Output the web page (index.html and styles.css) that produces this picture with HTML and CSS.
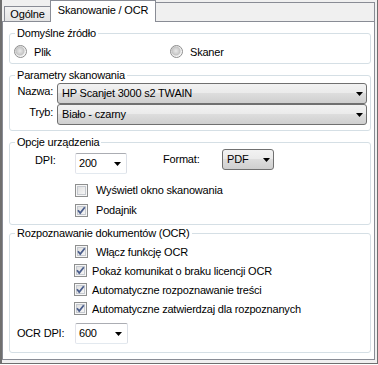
FILE: index.html
```html
<!DOCTYPE html>
<html lang="pl">
<head>
<meta charset="utf-8">
<title>Skanowanie / OCR</title>
<link rel="stylesheet" href="styles.css">
</head>
<body>
<div class="frame">
  <div class="tabstrip">
    <div class="tab">Ogólne</div>
    <div class="tab active">Skanowanie / OCR</div>
    <div class="tabfill"></div>
  </div>
  <div class="page">
    <fieldset class="group g1">
      <legend>Domyślne źródło</legend>
      <div class="radios">
        <div class="radio r-first"><span class="rb"></span>Plik</div>
        <div class="radio"><span class="rb"></span>Skaner</div>
      </div>
    </fieldset>

    <fieldset class="group g2">
      <legend>Parametry skanowania</legend>
      <div class="params">
        <span class="plabel">Nazwa:</span>
        <div class="combo">HP Scanjet 3000 s2 TWAIN<svg class="arrow" width="7" height="4" viewBox="0 0 7 4"><polygon points="0,0 7,0 3.5,4" fill="#000"/></svg></div>
        <span class="plabel">Tryb:</span>
        <div class="combo">Biało - czarny<svg class="arrow" width="7" height="4" viewBox="0 0 7 4"><polygon points="0,0 7,0 3.5,4" fill="#000"/></svg></div>
      </div>
    </fieldset>

    <fieldset class="group g3">
      <legend>Opcje urządzenia</legend>
      <div class="devrow">
        <span class="flabel dpi-label">DPI:</span>
        <div class="combo white dpi-combo">200<svg class="arrow" width="7" height="4" viewBox="0 0 7 4"><polygon points="0,0 7,0 3.5,4" fill="#000"/></svg></div>
        <span class="flabel fmt-label">Format:</span>
        <div class="combo fmt-combo">PDF<svg class="arrow" width="7" height="4" viewBox="0 0 7 4"><polygon points="0,0 7,0 3.5,4" fill="#000"/></svg></div>
      </div>
      <div class="checks checks-dev">
        <div class="check"><span class="cb"></span>Wyświetl okno skanowania</div>
        <div class="check"><span class="cb checked"><svg width="11" height="11" viewBox="0 0 11 11"><path d="M2 5.3 L4.2 8 L8.8 2.2" fill="none" stroke="#4b5e8c" stroke-width="1.8"/></svg></span>Podajnik</div>
      </div>
    </fieldset>

    <fieldset class="group g4">
      <legend>Rozpoznawanie dokumentów (OCR)</legend>
      <div class="checks checks-ocr">
        <div class="check wide"><span class="cb checked"><svg width="11" height="11" viewBox="0 0 11 11"><path d="M2 5.3 L4.2 8 L8.8 2.2" fill="none" stroke="#4b5e8c" stroke-width="1.8"/></svg></span>Włącz funkcję OCR</div>
        <div class="check narrow"><span class="cb checked"><svg width="11" height="11" viewBox="0 0 11 11"><path d="M2 5.3 L4.2 8 L8.8 2.2" fill="none" stroke="#4b5e8c" stroke-width="1.8"/></svg></span>Pokaż komunikat o braku licencji OCR</div>
        <div class="check narrow"><span class="cb checked"><svg width="11" height="11" viewBox="0 0 11 11"><path d="M2 5.3 L4.2 8 L8.8 2.2" fill="none" stroke="#4b5e8c" stroke-width="1.8"/></svg></span>Automatyczne rozpoznawanie treści</div>
        <div class="check narrow"><span class="cb checked"><svg width="11" height="11" viewBox="0 0 11 11"><path d="M2 5.3 L4.2 8 L8.8 2.2" fill="none" stroke="#4b5e8c" stroke-width="1.8"/></svg></span>Automatyczne zatwierdzaj dla rozpoznanych</div>
      </div>
      <div class="ocrrow">
        <span class="flabel ocr-label">OCR DPI:</span>
        <div class="combo white ocr-combo">600<svg class="arrow" width="7" height="4" viewBox="0 0 7 4"><polygon points="0,0 7,0 3.5,4" fill="#000"/></svg></div>
      </div>
    </fieldset>
  </div>
</div>
</body>
</html>
```

FILE: styles.css
```css
* { box-sizing: border-box; }
html, body { margin: 0; padding: 0; background: #fff; }
body {
  width: 378px;
  height: 365px;
  overflow: hidden;
  font-family: "Liberation Sans", Arial, sans-serif;
  font-size: 11px;
  letter-spacing: -0.2px;
  color: #000;
}

.frame {
  width: 378px;
  height: 364px;
  background: #f0f0f0;
  border-left: 2px solid #6f6f6f;
  border-right: 1px solid #6f6f6f;
  border-bottom: 1px solid #6f6f6f;
  display: flex;
  flex-direction: column;
}

/* tabs */
.tabstrip {
  height: 21px;
  display: flex;
  align-items: flex-end;
  flex-shrink: 0;
}
.tab {
  margin-left: 2px;
  width: 47px;
  height: 15px;
  border: 1px solid #898c95;
  border-bottom: none;
  background: linear-gradient(#f3f3f3, #e4e4e4);
  display: flex;
  align-items: center;
  justify-content: center;
  line-height: 13px;
}
.tab.active {
  position: relative;
  z-index: 1;
  margin-left: -1px;
  width: 106px;
  height: 22px;
  margin-bottom: -1px;
  background: #fff;
  padding-bottom: 2px;
}
.tabfill {
  flex: 1;
  height: 19px;
  margin-right: 2px;
  border-top: 1px solid #898c95;
  border-right: 1px solid #898c95;
  background: #f0f0f0;
}

/* page */
.page {
  width: 373px;
  height: 339px;
  background: #fff;
  border: 1px solid #898c95;
  padding: 0 3px 0 6px;
  flex-shrink: 0;
}

.group {
  display: block;
  margin: 0;
  padding: 0;
  min-width: 0;
  width: 362px;
  border: 1px solid #d5dfe5;
  border-radius: 3px;
}
.group legend {
  margin-left: 5px;
  padding: 0 2px;
  height: 14px;
  line-height: 14px;
}
.g1 { margin-top: 4px; }
.g2 { margin-top: 4px; }
.g3 { margin-top: 4px; }
.g4 { margin-top: 1px; }

/* radios */
.radios {
  height: 23px;
  display: flex;
  align-items: center;
  padding-left: 4px;
}
.radio {
  display: flex;
  align-items: center;
  gap: 7px;
}
.r-first { width: 156px; }
.rb {
  width: 13px;
  height: 13px;
  border-radius: 50%;
  border: 1px solid #8d8d8d;
  background: radial-gradient(circle at 45% 45%, #e9e9e9 0, #cfcfcf 3px, #c3c3c3 4px, #ececec 5px, #fbfbfb 6px);
}

/* params */
.params {
  display: grid;
  grid-template-columns: 43px 310px;
  column-gap: 4px;
  padding: 1px 0 5px 0;
}
.plabel {
  text-align: right;
  line-height: 17px;
}

.combo {
  height: 21px;
  border: 1px solid #707070;
  border-radius: 3px;
  background: linear-gradient(#f2f2f2 0%, #ebebeb 45%, #dddddd 50%, #cfcfcf 100%);
  display: flex;
  align-items: center;
  justify-content: space-between;
  padding: 0 3px 0 4px;
  line-height: 13px;
}
.combo.white {
  background: #fff;
  border-color: #abadb3 #dbdfe6 #e3e9ef #e2e3ea;
  border-radius: 2px;
  padding: 0 3px 0 3px;
}
.arrow { display: block; flex-shrink: 0; }

/* device row */
.devrow {
  height: 31px;
  display: flex;
  align-items: flex-start;
  padding-left: 25px;
}
.flabel {
  height: 21px;
  line-height: 21px;
}
.dpi-label { width: 40px; margin-top: 1px; }
.dpi-combo { width: 52px; margin-top: 4px; }
.dpi-combo .arrow, .ocr-combo .arrow { margin-right: 2px; }
.fmt-label { width: 59px; margin-left: 36px; }
.fmt-combo { width: 52px; }

/* checkboxes */
.checks { padding-left: 65px; }
.checks-dev { padding-bottom: 4px; }
.checks-dev .check { height: 20px; }
.checks-ocr { padding-top: 2px; }
.checks-ocr .check { height: 19px; }
.check {
  display: flex;
  align-items: center;
  gap: 8px;
}
.check.narrow { gap: 5px; margin-left: -1px; }
.cb {
  width: 13px;
  height: 13px;
  flex-shrink: 0;
  border: 1px solid #8e8f8f;
  background: linear-gradient(135deg, #d9d9d9 0%, #f2f2f2 70%, #fbfbfb 100%);
  box-shadow: inset 0 0 0 1px #f6f6f6, inset 0 0 0 2px #c5c9cf;
}
.cb svg { display: block; }

/* OCR dpi */
.ocrrow {
  display: flex;
  align-items: center;
  margin-top: 5px;
  padding: 0 0 8px 7px;
}
.ocr-label { width: 58px; }
.ocr-combo { width: 53px; }
```
